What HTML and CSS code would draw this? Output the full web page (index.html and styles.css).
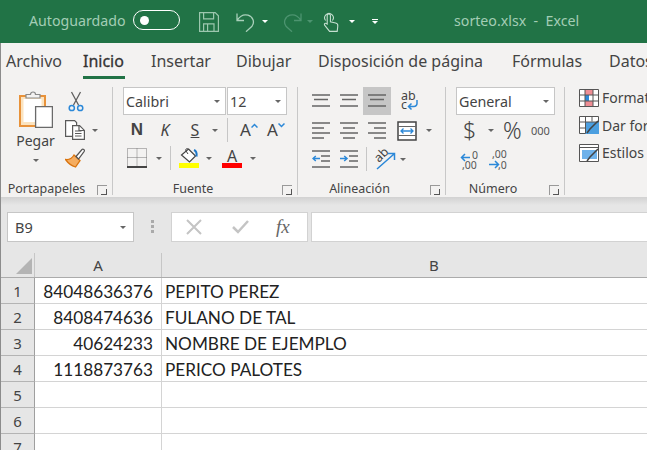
FILE: index.html
```html
<!DOCTYPE html>
<html lang="es">
<head>
<meta charset="utf-8">
<title>sorteo.xlsx - Excel</title>
<link rel="stylesheet" href="styles.css">
</head>
<body>
<div class="app">
  <header class="titlebar">
    <span class="autosave">Autoguardado</span>
    <span class="toggle"><span class="knob"></span></span>
    <svg class="qa ml19" width="20" height="20" viewBox="0 0 20 20" fill="none" stroke="#9cc7ae" stroke-width="1.2"><path d="M.6.6h15.6l3.2 3.2v15.6H.6z"/><path d="M4.6.6v6.2h10V.6M4.6 19.4v-7.6h10.4v7.6M8.6 12v7"/></svg>
    <svg class="qa ml17" width="19" height="20" viewBox="0 0 19 20" fill="none" stroke="#a9d0ba" stroke-width="1.3"><path d="M1 1.5v7h7M1.2 8.2C4 4 8 2 12 3.2c5 1.6 7 7 4 11l-6 5.5"/></svg>
    <span class="caret white ml7"></span>
    <svg class="qa ml15" width="19" height="20" viewBox="0 0 19 20" fill="none" stroke="#4d9470" stroke-width="1.3"><path d="M18 1.5v7h-7M17.8 8.2C15 4 11 2 7 3.2c-5 1.6-7 7-4 11l6 5.5"/></svg>
    <span class="caret dim ml5"></span>
    <svg class="qa ml10" width="16" height="21" viewBox="0 0 16 21" fill="none" stroke="#c5dfd0" stroke-width="1.1"><path d="M2.6 9.5a4.3 4.3 0 1 1 6.8 0"/><path d="M4.2 13V4.6a1.6 1.6 0 0 1 3.2 0v6.2l5.2 1.2c1.6.4 2.4 1.3 2.2 3l-.6 5.4H6.6L1.600 14.200c-.8-1.400.8-2.600 2-1.500z"/></svg>
    <span class="caret white ml10"></span>
    <span class="custom"><span class="dash"></span><span class="caret white small"></span></span>
    <span class="doc">sorteo.xlsx&nbsp; -&nbsp; Excel</span>
  </header>

  <main class="window">
    <nav class="tabs">
      <span class="tab">Archivo</span>
      <span class="tab active">Inicio</span>
      <span class="tab">Insertar</span>
      <span class="tab">Dibujar</span>
      <span class="tab">Disposición de página</span>
      <span class="tab">Fórmulas</span>
      <span class="tab">Datos</span>
    </nav>

    <section class="ribbon">
      <div class="group g-clip">
        <div class="group-body clip-body">
          <div class="paste">
            <svg width="34" height="38" viewBox="0 0 34 38"><path d="M1 6h25v30H1z" fill="#fbe3bf" stroke="#e8923a" stroke-width="2"/><path d="M4.500 9h18v23h-18z" fill="#fff"/><path d="M7 8V4.500h4.500a2.500 2.500 0 0 1 5 0H21V8z" fill="#f3f2f1" stroke="#8a8a8a" stroke-width="1.200"/><path d="M16.600 16.700h16.800v20.600H16.600z" fill="#fff" stroke="#6a6a6a" stroke-width="1.300"/></svg>
            <span class="paste-label">Pegar</span>
            <span class="caret"></span>
          </div>
          <div class="clip-tools">
            <svg class="scissors" width="16" height="21" viewBox="0 0 16 21" fill="none"><path d="M3.500 1l7 13M12.500 1l-7 13" stroke="#5f5f5f" stroke-width="1.300"/><circle cx="3.800" cy="17" r="2.600" stroke="#2b88d8" stroke-width="1.500"/><circle cx="12.200" cy="17" r="2.600" stroke="#2b88d8" stroke-width="1.500"/></svg>
            <div class="row-c copy-row">
              <svg width="20" height="20" viewBox="0 0 20 20" fill="#fff" stroke="#5a5a5a" stroke-width="1.200"><path d="M.6.600h9l2 2v13.800H.6z"/><path d="M7.600 5.600h7l4.800 4.800v9H7.600z"/><path d="M10 11h6.500M10 13.500h6.500M10 16h6.500M14 6v4.500h5" fill="none"/></svg>
              <span class="caret ml7"></span>
            </div>
            <svg width="21" height="20" viewBox="0 0 21 20"><path d="M9 7l6 5.500-4.500 6.500C7 18 3 15 .5 11.500 3.500 12 6.500 11 9 7z" fill="#f5ad60" stroke="#d9730d" stroke-width="1.300"/><path d="M11 8.500l6-7c1-1 3 .5 2.200 1.800l-5.700 7.700z" fill="#fff" stroke="#555" stroke-width="1.200"/></svg>
          </div>
        </div>
        <div class="group-foot">Portapapeles<span class="launcher"></span></div>
      </div>

      <div class="group g-font">
        <div class="group-body stack">
          <div class="row-c">
            <span class="combo w103"><span class="combo-text">Calibri</span><span class="caret"></span></span>
            <span class="combo w60 ml1"><span class="combo-text">12</span><span class="caret"></span></span>
          </div>
          <div class="row-c row2">
            <b class="fmt bold">N</b>
            <i class="fmt ital">K</i>
            <u class="fmt und">S</u>
            <span class="caret ml9"></span>
            <span class="vsep ml9"></span>
            <span class="grow-a ml12">A<svg width="7" height="5" viewBox="0 0 7 5" fill="none" stroke="#2b88d8" stroke-width="1.500"><path d="M.5 4.500l3-3 3 3"/></svg></span>
            <span class="grow-a ml10">A<svg width="7" height="5" viewBox="0 0 7 5" fill="none" stroke="#2b88d8" stroke-width="1.500"><path d="M.5.500l3 3 3-3"/></svg></span>
          </div>
          <div class="row-c row3">
            <svg class="ml4" width="20" height="20" viewBox="0 0 20 20" fill="none" stroke="#777" stroke-dasharray="1 1"><path d="M.5.500h19v18H.5zM10 .5v18M.5 9.500h19"/><path d="M0 19h20" stroke="#444" stroke-width="2" stroke-dasharray="none"/></svg>
            <span class="caret ml9"></span>
            <span class="vsep ml8"></span>
            <span class="swatch-btn ml8">
              <svg width="20" height="15" viewBox="0 0 20 15" fill="none"><path d="M9.500 1l7 7-6 6-8-7z" fill="#fff" stroke="#444" stroke-width="1.200"/><path d="M9 1c-1-1-3 0-2 2l2 3" stroke="#444"/><path d="M15 2c2.500 1 3 3 2.500 6.500" stroke="#1f78c8" stroke-width="2"/></svg>
              <span class="swatch yellow"></span>
            </span>
            <span class="caret ml7"></span>
            <span class="swatch-btn ml10">
              <span class="font-a">A</span>
              <span class="swatch red"></span>
            </span>
            <span class="caret ml8"></span>
          </div>
        </div>
        <div class="group-foot">Fuente<span class="launcher"></span></div>
      </div>

      <div class="group g-align">
        <div class="group-body stack">
          <div class="row-c">
            <span class="cell"><svg class="lines" width="18" height="14" viewBox="0 0 18 14"><path d="M0 1h18M2 5.500h14M0 12h18"/></svg></span>
            <span class="cell"><svg class="lines" width="18" height="14" viewBox="0 0 18 14"><path d="M0 1h18M2 5.500h14M0 12h18"/></svg></span>
            <span class="cell on"><svg class="lines" width="18" height="14" viewBox="0 0 18 14"><path d="M0 1h18M2 5.500h14M0 12h18"/></svg></span>
            <svg class="ml9" width="19" height="20" viewBox="0 0 19 20" fill="none"><text x="1" y="9" class="mini-text">ab</text><text x="1" y="18" class="mini-text">c</text><path d="M17 9v3.500a3 3 0 0 1-3 3H8.500M11.500 12.500l-3 3 3 3" stroke="#2b88d8" stroke-width="1.500"/></svg>
          </div>
          <div class="row-c al-row2">
            <span class="cell"><svg class="lines" width="18" height="17" viewBox="0 0 18 17"><path d="M0 1h18M0 6h12M0 11h18M0 16h12"/></svg></span>
            <span class="cell"><svg class="lines" width="18" height="17" viewBox="0 0 18 17"><path d="M0 1h18M3 6h12M0 11h18M3 16h12"/></svg></span>
            <span class="cell"><svg class="lines" width="18" height="17" viewBox="0 0 18 17"><path d="M0 1h18M6 6h12M0 11h18M6 16h12"/></svg></span>
            <svg class="ml6" width="20" height="20" viewBox="0 0 20 20" fill="none"><path d="M1 1h18v18H1z" fill="#fff" stroke="#444" stroke-width="1.500"/><path d="M1 5.500h18M1 14.500h18" stroke="#666"/><path d="M4 10h12M6.500 7.500L4 10l2.500 2.500M13.500 7.500L16 10l-2.500 2.500" stroke="#2b88d8" stroke-width="1.300"/></svg>
            <span class="caret ml9"></span>
          </div>
          <div class="row-c al-row3">
            <span class="cell"><svg class="lines" width="18" height="18" viewBox="0 0 18 18"><path d="M0 1h18M9 6h9M9 11h9M0 17h18"/><path class="blue" d="M8 8.500H1M3.800 6L1 8.500 3.800 11"/></svg></span>
            <span class="cell"><svg class="lines" width="18" height="18" viewBox="0 0 18 18"><path d="M0 1h18M9 6h9M9 11h9M0 17h18"/><path class="blue" d="M0 8.500h7M4.200 6L7 8.500 4.200 11"/></svg></span>
            <span class="vsep ml3"></span>
            <svg class="ml7" width="23" height="22" viewBox="0 0 23 22" fill="none"><text x="0" y="0" class="mini-text" transform="translate(5 15) rotate(-45)">ab</text><path d="M3 21L20 6M14 5.500h6.500V12" stroke="#2b88d8" stroke-width="1.500"/></svg>
            <span class="caret ml3"></span>
          </div>
        </div>
        <div class="group-foot">Alineación<span class="launcher"></span></div>
      </div>

      <div class="group g-num">
        <div class="group-body stack">
          <span class="combo w99"><span class="combo-text">General</span><span class="caret"></span></span>
          <div class="row-c num-row2">
            <span class="dollar">$</span>
            <span class="caret ml13"></span>
            <span class="percent">%</span>
            <span class="thousand">000</span>
          </div>
          <div class="row-c num-row3">
            <svg width="20" height="20" viewBox="0 0 20 20" fill="none"><path d="M10 7.500H1.500M5 4L1.500 7.500 5 11" stroke="#2b88d8" stroke-width="1.500"/><text x="12" y="9" class="dec-text">0</text><text x="2" y="19" class="dec-text">,00</text></svg>
            <svg class="ml9" width="20" height="20" viewBox="0 0 20 20" fill="none"><text x="3" y="8" class="dec-text">,00</text><path d="M0 14.500h9.500M6 11l3.500 3.500L6 18" stroke="#2b88d8" stroke-width="1.500"/><text x="9" y="19" class="dec-text">,0</text></svg>
          </div>
        </div>
        <div class="group-foot">Número<span class="launcher"></span></div>
      </div>

      <div class="group g-style">
        <div class="style-row"><svg width="20" height="18" viewBox="0 0 20 18" fill="#fff" stroke="#555"><path d="M.5.500h19v17H.5z"/><path d="M6 1h8v5H6zM6 12h8v5H6z" fill="#ee8d94" stroke="none"/><path d="M6 6h4v6H6z" fill="#2b88d8" stroke="none"/><path d="M.5 6h19M.5 12h19M6 .5v17M14 .5v17"/></svg><span>Formato</span></div>
        <div class="style-row"><svg width="20" height="18" viewBox="0 0 20 18" fill="#fff" stroke="#555"><path d="M.5.500h19v17H.5z"/><path d="M6 6h14v12H6z" fill="#4c9fe0" stroke="none"/><path d="M.5 6h19M.5 12h6M6.500 .5v17M13 .5v5"/><path d="M19 5l-8 8-3 4" stroke="#444" stroke-width="1.500" fill="none"/></svg><span>Dar formato</span></div>
        <div class="style-row"><svg width="20" height="18" viewBox="0 0 20 18" fill="#fff" stroke="#555"><path d="M.5.500h19v17H.5z"/><path d="M3 6h15v9H3z" fill="#6fb2ea" stroke="none"/><path d="M.5 3.500h19"/><path d="M19 5l-8 8-3 4" stroke="#444" stroke-width="1.500" fill="none"/></svg><span>Estilos de celda</span></div>
      </div>
    </section>
    <div class="ribbon-shadow"></div>

    <section class="formula">
      <span class="namebox"><span>B9</span><span class="caret"></span></span>
      <span class="grip"></span>
      <span class="fx-box">
        <svg width="16" height="16" viewBox="0 0 16 16" fill="none" stroke="#c4c4c4" stroke-width="2"><path d="M1 1l14 14M15 1L1 15"/></svg>
        <svg class="check" width="17" height="14" viewBox="0 0 17 14" fill="none" stroke="#c4c4c4" stroke-width="2.500"><path d="M1 7l5 5L16 1"/></svg>
        <span class="fx">fx</span>
      </span>
      <span class="fx-input"></span>
    </section>

    <section class="sheet">
      <div class="sheet-row head">
        <span class="corner"><span class="tri"></span></span>
        <span class="col-h">A</span>
        <span class="col-h">B</span>
      </div>
      <div class="sheet-row"><span class="row-h">1</span><span class="c num">84048636376</span><span class="c">PEPITO PEREZ</span></div>
      <div class="sheet-row"><span class="row-h">2</span><span class="c num">8408474636</span><span class="c">FULANO DE TAL</span></div>
      <div class="sheet-row"><span class="row-h">3</span><span class="c num">40624233</span><span class="c">NOMBRE DE EJEMPLO</span></div>
      <div class="sheet-row"><span class="row-h">4</span><span class="c num">1118873763</span><span class="c">PERICO PALOTES</span></div>
      <div class="sheet-row"><span class="row-h">5</span><span class="c num"></span><span class="c"></span></div>
      <div class="sheet-row"><span class="row-h">6</span><span class="c num"></span><span class="c"></span></div>
      <div class="sheet-row"><span class="row-h">7</span><span class="c num"></span><span class="c"></span></div>
    </section>
  </main>
</div>
</body>
</html>
```
FILE: styles.css
```css
* { box-sizing: border-box; }
html, body { margin: 0; padding: 0; }
body { width: 647px; height: 450px; overflow: hidden; background: #fff; font-family: "Noto Sans", sans-serif; color: #444; }
.app { width: 647px; height: 450px; overflow: hidden; display: flex; flex-direction: column; }
svg { display: block; flex: none; }

.ml1 { margin-left: 1px; } .ml3 { margin-left: 3px; } .ml4 { margin-left: 4px; } .ml5 { margin-left: 5px; }
.ml6 { margin-left: 6px; } .ml7 { margin-left: 7px; } .ml8 { margin-left: 8px; } .ml9 { margin-left: 9px; }
.ml10 { margin-left: 10px; } .ml11 { margin-left: 11px; } .ml12 { margin-left: 12px; } .ml13 { margin-left: 13px; }
.ml15 { margin-left: 15px; } .ml17 { margin-left: 17px; } .ml19 { margin-left: 19px; }

.caret { display: inline-block; flex: none; width: 0; height: 0; border-left: 3px solid transparent; border-right: 3px solid transparent; border-top: 3px solid #666; }
.caret.white { border-top-color: #fff; }
.caret.dim { border-top-color: #4d9470; }

.titlebar { flex: none; height: 43px; background: #217346; display: flex; align-items: center; padding-left: 29px; white-space: nowrap; }
.autosave { width: 104px; font-size: 14.200px; color: #a3cdb5; margin-top: -3px; }
.toggle { width: 47px; height: 20px; margin-top: -3px; border: 1px solid #fff; border-radius: 10px; display: flex; align-items: center; padding-left: 6px; }
.knob { width: 9px; height: 9px; border-radius: 50%; background: #fff; }
.custom { display: inline-flex; flex-direction: column; gap: 1px; align-items: center; width: 6px; margin-left: 17px; }
.dash { width: 6px; height: 1px; background: #fff; }
.doc { margin-left: 76px; font-size: 14.200px; color: #a3cdb5; margin-top: -3px; }

.window { flex: 1; min-height: 0; display: flex; flex-direction: column; border-left: 1px solid #8c8c8c; background: #e6e6e6; }
.tabs { flex: none; height: 37px; background: #f3f2f1; display: grid; grid-template-columns: 77px 68px 85px 82px 194px 97px 1fr; padding-left: 5px; font-size: 16px; line-height: 21px; white-space: nowrap; overflow: hidden; }
.tab { height: 36px; padding-top: 8px; color: #444; }
.tab.active { color: #333; justify-self: start; width: 42px; -webkit-text-stroke: .3px #333; border-bottom: 3px solid #217346; }

.ribbon { flex: none; height: 117px; background: #f3f2f1; display: flex; padding-top: 7px; overflow: hidden; }
.ribbon-shadow { flex: none; height: 8px; background: linear-gradient(#d2d2d2, #e6e6e6); }
.group { flex: none; height: 108px; display: flex; flex-direction: column; border-right: 1px solid #c8c8c8; position: relative; }
.group-body { flex: 1; min-height: 0; }
.group-foot { flex: none; height: 18px; margin-left: -10px; padding: 3px 24px 0 0; text-align: center; font-size: 12.500px; line-height: 18px; color: #444; position: relative; }
.launcher { position: absolute; right: 5px; bottom: 0; width: 10px; height: 10px; border-left: 1px solid #999; border-top: 1px solid #999; }
.launcher::after { content: ""; position: absolute; right: 0; bottom: 0; width: 5px; height: 5px; border-right: 1px solid #555; border-bottom: 1px solid #555; }
.row-c { display: flex; align-items: center; }
.stack { display: flex; flex-direction: column; align-items: flex-start; }

.g-clip { width: 112px; }
.g-clip .group-foot { margin-left: 0; padding-right: 20px; }
.clip-body { display: flex; padding-left: 16px; }
.paste { width: 37px; display: flex; flex-direction: column; align-items: center; padding-top: 3px; }
.paste-label { font-size: 14px; line-height: 20px; margin-top: 3px; }
.paste .caret { margin-top: 8px; }
.clip-tools { margin-left: 11px; display: flex; flex-direction: column; padding-top: 4px; }
.scissors { margin-left: 3px; margin-bottom: 8px; }
.copy-row { margin-bottom: 8px; }

.g-font { width: 185px; padding-left: 10px; }
.combo { height: 28px; background: #fff; border: 1px solid #c6c6c6; display: flex; align-items: center; justify-content: space-between; padding: 0 5px 0 2px; flex: none; }
.combo-text { font-size: 14.300px; color: #444; }
.w103 { width: 103px; } .w60 { width: 60px; } .w99 { width: 99px; }
.row2 { height: 28px; margin-top: 1px; }
.row3 { height: 24px; margin-top: 2px; }
.fmt { display: block; width: 16px; text-align: center; font-size: 16px; line-height: 20px; color: #444; margin-left: 12px; font-style: normal; }
.fmt.bold { margin-left: 6px; font-family: "Liberation Sans", sans-serif; font-weight: 700; font-size: 17px; }
.fmt.ital { font-style: italic; }
.fmt.und { text-decoration: underline; margin-left: 14px; }
.vsep { flex: none; width: 1px; height: 24px; background: #c6c6c6; }
.grow-a { display: inline-flex; font-size: 17px; line-height: 20px; color: #444; width: 17px; position: relative; }
.grow-a svg { margin-left: 0; margin-top: 3px; }
.swatch-btn { display: flex; flex-direction: column; width: 20px; align-items: center; }
.swatch { display: block; width: 20px; height: 5px; }
.yellow { background: #ffff00; } .red { background: #f00; }
.font-a { font-size: 16px; line-height: 16px; height: 15px; color: #444; }

.g-align { width: 148px; padding-left: 9px; }
.g-align .group-foot { margin-left: -9px; }
.cell { flex: none; width: 28px; height: 28px; display: flex; align-items: center; justify-content: center; }
.cell.on { background: #c6c6c6; }
.lines { fill: none; stroke: #666; stroke-width: 1.500; }
.lines .blue { stroke: #2b88d8; }
.mini-text { font: 12.500px "Noto Sans", sans-serif; fill: #444; }
.al-row2 { height: 29px; margin-top: 1px; }
.al-row3 { height: 26px; margin-top: 1px; }

.g-num { width: 119px; padding-left: 10px; }
.num-row2 { height: 28px; margin-top: 1px; padding-left: 7px; }
.num-row3 { height: 32px; padding-left: 4px; }
.dollar { font-size: 23px; font-weight: 300; line-height: 26px; width: 12px; text-align: center; }
.percent { font-size: 23px; font-weight: 300; line-height: 26px; margin-left: 9px; width: 20px; }
.thousand { font-size: 11px; margin-left: 8px; color: #555; }
.dec-text { font: 10.500px "Noto Sans", sans-serif; fill: #555; }

.g-style { flex: none; width: 90px; margin-top: -3px; padding-left: 14px; border: 0; white-space: nowrap; overflow: hidden; }
.style-row { display: flex; align-items: center; gap: 3px; height: 27.500px; font-size: 14px; color: #444; }

.formula { flex: none; height: 48px; display: flex; align-items: flex-start; padding-top: 7px; padding-left: 6px; background: #e6e6e6; }
.namebox { width: 127px; height: 30px; background: #fff; border: 1px solid #c6c6c6; display: flex; align-items: center; justify-content: space-between; padding: 0 7px; font-size: 14.500px; color: #444; }
.grip { width: 3px; height: 13px; margin: 8px 0 0 17px; background: repeating-linear-gradient(#aaa 0 3px, transparent 3px 5px); }
.fx-box { width: 137px; height: 30px; margin-left: 17px; background: #fff; border: 1px solid #d2d2d2; display: flex; align-items: center; padding-left: 14px; }
.check { margin-left: 30px; }
.fx { margin-left: 27px; font-family: "Liberation Serif", serif; font-style: italic; font-size: 19px; color: #666; }
.fx-input { flex: 1; height: 30px; margin-left: 3px; background: #fff; border: 1px solid #d2d2d2; border-right: 0; }

.sheet { flex: 1; min-height: 0; overflow: hidden; background: #fff; }
.sheet-row { display: grid; grid-template-columns: 34px 127px 545px; grid-template-rows: 26px; height: 26px; font-family: Lato, sans-serif; font-size: 17.200px; color: #222; }
.sheet-row.head { height: 25px; grid-template-rows: 24px; background: #e6e6e6; border-bottom: 1px solid #ababab; }
.corner { border-right: 1px solid #c6c6c6; position: relative; }
.tri { position: absolute; right: 2px; bottom: 3px; width: 0; height: 0; border-left: 16px solid transparent; border-bottom: 16px solid #b4b4b4; }
.col-h { border-right: 1px solid #c6c6c6; text-align: center; font-family: "Noto Sans", sans-serif; font-size: 15px; line-height: 25px; color: #444; }
.row-h { background: #e6e6e6; border-right: 1px solid #9f9f9f; border-bottom: 1px solid #b4b4b4; text-align: center; line-height: 27px; font-family: "Noto Sans", sans-serif; font-size: 15px; color: #444; }
.c { border-right: 1px solid #d4d4d4; border-bottom: 1px solid #d4d4d4; padding: 1px 4px 0 3px; line-height: 25px; white-space: nowrap; }
.num { text-align: right; padding-right: 8px; }
```
